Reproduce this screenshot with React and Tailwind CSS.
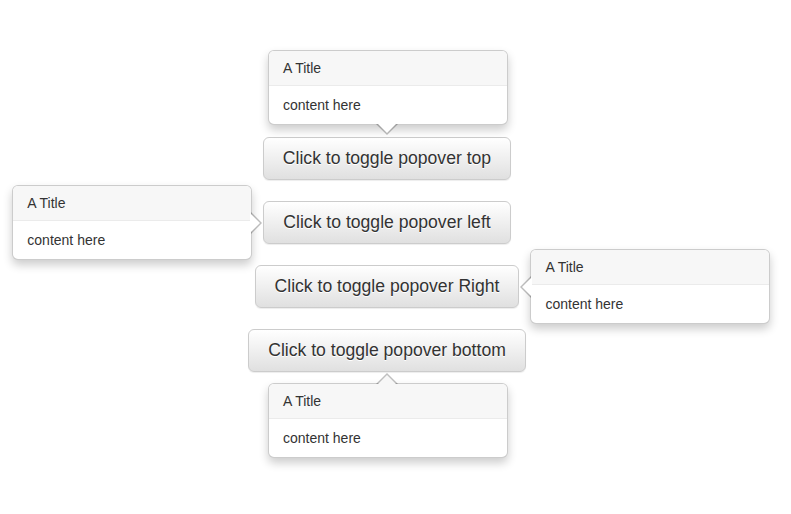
import React from "react";

function Popover({ className = "" }) {
  return (
    <div
      className={
        "absolute z-10 w-[240px] rounded-[6px] border border-[rgba(0,0,0,0.2)] bg-white shadow-[0_5px_10px_rgba(0,0,0,0.2)] " +
        className
      }
    >
      <div className="rounded-t-[5px] border-b border-[#ebebeb] bg-[#f7f7f7] px-[14px] py-[8px] text-[14px] leading-[18px] text-[#333]">
        A Title
      </div>
      <div className="px-[14px] py-[9px] text-[14px] leading-[20px] text-[#333]">content here</div>
    </div>
  );
}

function Btn({ children }) {
  return (
    <button className="rounded-[6px] border border-[#ccc] bg-[linear-gradient(to_bottom,#fff_0%,#e0e0e0_100%)] px-[19px] py-[9px] text-[17.6px] leading-[23px] text-[#333] [text-shadow:0_1px_0_#fff] shadow-[inset_0_1px_0_rgba(255,255,255,0.15),0_1px_1px_rgba(0,0,0,0.075)]">
      {children}
    </button>
  );
}

export default function App() {
  return (
    <div
      className="h-[514px] w-[791px] overflow-hidden bg-white"
      style={{ fontFamily: '"Liberation Sans", Arial, sans-serif' }}
    >
      <div className="flex w-[774px] flex-col items-center gap-[21px] pt-[137px]">
        {/* top */}
        <div className="relative">
          <Btn>Click to toggle popover top</Btn>
          <Popover className="bottom-[calc(100%+12px)] left-1/2 -ml-[119px]" />
          <div className="absolute bottom-[calc(100%+2px)] left-1/2 z-20 -ml-[11px] h-0 w-0 border-x-[11px] border-t-[11px] border-b-0 border-x-transparent border-t-[rgba(0,0,0,0.25)]" />
          <div className="absolute bottom-[calc(100%+4px)] left-1/2 z-20 -ml-[10px] h-0 w-0 border-x-[10px] border-t-[10px] border-b-0 border-x-transparent border-t-white" />
        </div>
        {/* left */}
        <div className="relative">
          <Btn>Click to toggle popover left</Btn>
          <Popover className="right-[calc(100%+11px)] top-1/2 -mt-[38px]" />
          <div className="absolute right-[calc(100%+1px)] top-1/2 z-20 -mt-[11px] h-0 w-0 border-y-[11px] border-l-[11px] border-r-0 border-y-transparent border-l-[rgba(0,0,0,0.25)]" />
          <div className="absolute right-[calc(100%+3px)] top-1/2 z-20 -mt-[10px] h-0 w-0 border-y-[10px] border-l-[10px] border-r-0 border-y-transparent border-l-white" />
        </div>
        {/* right */}
        <div className="relative">
          <Btn>Click to toggle popover Right</Btn>
          <Popover className="left-[calc(100%+11px)] top-1/2 -mt-[38px]" />
          <div className="absolute left-[calc(100%+1px)] top-1/2 z-20 -mt-[11px] h-0 w-0 border-y-[11px] border-r-[11px] border-l-0 border-y-transparent border-r-[rgba(0,0,0,0.25)]" />
          <div className="absolute left-[calc(100%+3px)] top-1/2 z-20 -mt-[10px] h-0 w-0 border-y-[10px] border-r-[10px] border-l-0 border-y-transparent border-r-white" />
        </div>
        {/* bottom */}
        <div className="relative">
          <Btn>Click to toggle popover bottom</Btn>
          <Popover className="top-[calc(100%+11px)] left-1/2 -ml-[119px]" />
          <div className="absolute top-[calc(100%+1px)] left-1/2 z-20 -ml-[11px] h-0 w-0 border-x-[11px] border-b-[11px] border-t-0 border-x-transparent border-b-[rgba(0,0,0,0.25)]" />
          <div className="absolute top-[calc(100%+3px)] left-1/2 z-20 -ml-[10px] h-0 w-0 border-x-[10px] border-b-[10px] border-t-0 border-x-transparent border-b-[#f7f7f7]" />
        </div>
      </div>
    </div>
  );
}
